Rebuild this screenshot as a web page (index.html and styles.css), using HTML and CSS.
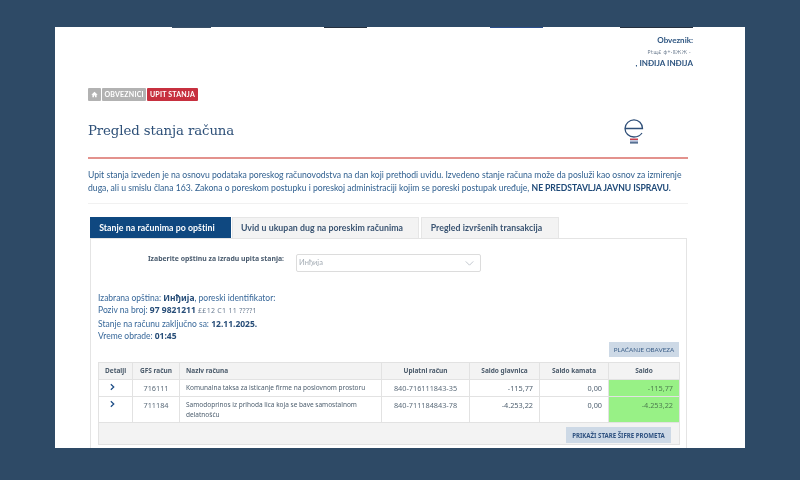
FILE: index.html
```html
<!DOCTYPE html>
<html lang="sr">
<head>
<meta charset="utf-8">
<title>Pregled stanja računa</title>
<link rel="stylesheet" href="styles.css">
</head>
<body>
<main class="sheet">
  <div class="topstrip"><i class="s1"></i><i class="s2"></i><i class="s3"></i><i class="s4"></i></div>
  <header class="taxpayer">
    <div>Obveznik:</div>
    <div class="masked">Ptщ£ ф+·ßЖЖ ·</div>
    <div>, INĐIJA INĐIJA</div>
  </header>
  <nav class="crumbs">
    <span class="crumb home"><svg viewBox="0 0 10 10" width="7" height="7"><path d="M5 1 0.5 5.2H2V9h2.2V6.4h1.6V9H8V5.2h1.5z" fill="#fff"/></svg></span>
    <span class="crumb">OBVEZNICI</span>
    <span class="crumb current">UPIT STANJA</span>
  </nav>
  <div class="titlebar">
    <h1>Pregled stanja računa</h1>
    <svg class="logo" viewBox="0 0 22 28" width="22" height="28">
      <path d="M2.5 11.5H19.5C19.5 6.5 15.5 2.8 11 2.8S2 6.8 2 11.5 6 20 11 20c3.4 0 6.300-1.500 8-4" fill="none" stroke="#2f4f78" stroke-width="1.300"/>
      <rect x="7" y="21.500" width="8" height="1.500" fill="#c8424e"/>
      <rect x="7" y="23.500" width="8" height="1.300" fill="#8d9cc0"/>
      <rect x="7" y="25.200" width="8" height="1.300" fill="#2f4f78"/>
    </svg>
  </div>
  <p class="notice">Upit stanja izveden je na osnovu podataka poreskog računovodstva na dan koji prethodi uvidu. Izvedeno stanje računa može da posluži kao osnov za izmirenje duga, ali u smislu člana 163. Zakona o poreskom postupku i poreskoj administraciji kojim se poreski postupak uređuje, <b>NE PREDSTAVLJA JAVNU ISPRAVU.</b></p>
  <div class="tabs">
    <div class="tab active">Stanje na računima po opštini</div>
    <div class="tab t2">Uvid u ukupan dug na poreskim računima</div>
    <div class="tab t3">Pregled izvršenih transakcija</div>
  </div>
  <section class="pane">
    <div class="selectrow">
      <label>Izaberite opštinu za izradu upita stanja:</label>
      <div class="select"><span>Инђија</span><svg viewBox="0 0 10 6" width="9" height="5"><path d="M.5.5 5 5 9.500.5" fill="none" stroke="#b5bcc4"/></svg></div>
    </div>
    <div class="info">
      <div>Izabrana opština: <b>Инђија</b>, poreski identifikator:</div>
      <div>Poziv na broj: <b>97 9821211 <span class="fuzz">££12 C1 11 ????1</span></b></div>
      <div>Stanje na računu zaključno sa: <b>12.11.2025.</b></div>
      <div>Vreme obrade: <b>01:45</b></div>
    </div>
    <div class="actions"><button class="btn pay">PLAĆANJE OBAVEZA</button></div>
    <table class="grid">
      <colgroup><col class="c1"><col class="c2"><col class="c3"><col class="c4"><col class="c5"><col class="c6"><col class="c7"></colgroup>
      <thead>
        <tr><th>Detalji</th><th>GFS račun</th><th class="left">Naziv računa</th><th>Uplatni račun</th><th>Saldo glavnica</th><th>Saldo kamata</th><th>Saldo</th></tr>
      </thead>
      <tbody>
        <tr><td class="mid"><svg class="chev" viewBox="0 0 6 8" width="5" height="8"><path d="M1 .8 4.500 4 1 7.200" fill="none" stroke="#1d4d86" stroke-width="1.500"/></svg></td><td class="mid">716111</td><td>Komunalna taksa za isticanje firme na poslovnom prostoru</td><td class="mid">840-716111843-35</td><td class="num">-115,77</td><td class="num">0,00</td><td class="num green">-115,77</td></tr>
        <tr class="tall"><td class="mid"><svg class="chev" viewBox="0 0 6 8" width="5" height="8"><path d="M1 .8 4.500 4 1 7.200" fill="none" stroke="#1d4d86" stroke-width="1.500"/></svg></td><td class="mid">711184</td><td>Samodoprinos iz prihoda lica koja se bave samostalnom delatnošću</td><td class="mid">840-711184843-78</td><td class="num">-4.253,22</td><td class="num">0,00</td><td class="num green">-4.253,22</td></tr>
      </tbody>
      <tfoot>
        <tr><td colspan="7"><div class="footcell"><button class="btn old">PRIKAŽI STARE ŠIFRE PROMETA</button></div></td></tr>
      </tfoot>
    </table>
  </section>
</main>
</body>
</html>
```
FILE: styles.css
```css
* { box-sizing: border-box; }
html, body { margin: 0; height: 100%; }
body {
  background: #2e4a66;
  font-family: "Lato", "Liberation Sans", sans-serif;
  color: #2e5b87;
  overflow: hidden;
  padding: 27px 55px 32px;
}
.sheet {
  position: relative;
  height: 421px;
  background: #fff;
  overflow: hidden;
  padding: 0 52px 0 33px;
  filter: blur(0.4px);
}
.topstrip { height: 1px; display: flex; margin-left: -33px; }
.topstrip i { display: block; height: 1px; background: #25303f; }
.topstrip .s1 { width: 40px; margin-left: 117px; background: #3a5068; }
.topstrip .s2 { width: 45px; margin-left: 113px; }
.topstrip .s3 { width: 55px; margin-left: 123px; background: #2c4f8c; }
.topstrip .s4 { width: 75px; margin-left: 77px; }
.taxpayer {
  text-align: right;
  font-size: 8px;
  line-height: 12px;
  padding-top: 6px;
  height: 54px;
  font-weight: 700;
  color: #2e5580;
}
.taxpayer div { height: 11.500px; }
.taxpayer .masked { font-size: 5px; font-weight: 400; letter-spacing: .5px; padding-right: 2px; color: #6f7f92; }
.crumbs { display: flex; gap: 1px; height: 13px; margin-top: 6px; }
.crumb {
  background: #b2b2b2;
  color: #fff;
  font-size: 7px;
  font-weight: 700;
  line-height: 13px;
  padding: 0 2.500px;
  letter-spacing: .2px;
  border-radius: 1px;
}
.crumb.home { width: 13px; padding: 0; display: flex; align-items: center; justify-content: center; margin-right: 0; }
.crumb.current { background: #c7303f; padding: 0 3.200px; margin-left: -.5px; }
.titlebar {
  position: relative;
  height: 58px;
  padding-top: 20px;
  border-bottom: 2px solid #e3928d;
  width: 600px;
}
h1 {
  margin: 0;
  font-family: "DejaVu Serif", "Liberation Serif", serif;
  font-weight: 400;
  font-size: 13.300px;
  line-height: 20px;
  color: #2e5078;
  letter-spacing: -.1px;
}
.logo { position: absolute; right: 43px; top: 16px; }
.notice {
  margin: 10px 0 0;
  width: 600px;
  height: 35px;
  font-size: 8.650px;
  line-height: 12.500px;
  border-bottom: 1px solid #f1f1f1;
  color: #2f5f8f;
}
.notice b { color: #1f4a78; letter-spacing: -.05px; }
.tabs { display: flex; margin: 13px 0 0 2px; height: 21px; align-items: stretch; }
.tab {
  font-size: 8.750px;
  line-height: 20px;
  text-align: center;
  white-space: nowrap;
  background: #f3f3f3;
  font-weight: 700;
  color: #3a5472;
  border: 1px solid #e6e6e6;
  border-bottom: 0;
  letter-spacing: .05px;
  padding-right: 7px;
}
.tab.active { width: 141px; background: #0f4880; color: #fff; border-color: #0f4880; }
.tab.t2 { width: 187px; margin-left: 1px; }
.tab.t3 { width: 138px; margin-left: 2px; }
.pane {
  margin-left: 2px;
  width: 597px;
  height: 220px;
  border: 1px solid #e4e4e4;
  border-bottom: 0;
  padding: 15px 7px 0 7px;
}
.selectrow { display: flex; align-items: flex-start; height: 18px; }
.selectrow label {
  width: 186px;
  text-align: right;
  font-size: 6.900px;
  font-weight: 700;
  line-height: 9px;
  color: #4a5c6f;
  font-family: "Noto Sans", sans-serif;
}
.select {
  margin-left: 12px;
  width: 185px;
  height: 18px;
  border: 1px solid #dcdcdc;
  border-radius: 2px;
  font-size: 7.500px;
  line-height: 16px;
  padding: 0 6px 0 2px;
  color: #a5adb5;
  display: flex;
  justify-content: space-between;
  align-items: center;
}
.info { margin-top: 19.500px; font-size: 8.500px; line-height: 12.600px; color: #38689a; height: 50.500px; }
.info b { color: #274d78; font-family: "Noto Sans", sans-serif; }
.fuzz { font-size: 7px; letter-spacing: .3px; color: #6a7c92; font-weight: 400; }
.actions { display: flex; justify-content: flex-end; height: 15px; width: 581px; margin-bottom: 5px; }
.btn {
  border: 0;
  padding: 0;
  font-family: "Lato", sans-serif;
  background: #cdd9e6;
  color: #44668e;
  font-size: 6.200px;
  line-height: 15px;
  height: 15px;
  font-weight: 500;
  white-space: nowrap;
}
.btn.pay { width: 70px; }
.btn.old { width: 105px; height: 16px; font-weight: 700; color: #2f5280; font-family: "Noto Sans", sans-serif; font-size: 6.100px; }
.grid {
  table-layout: fixed;
  width: 581px;
  border-collapse: collapse;
  font-family: "Noto Sans", sans-serif;
  font-size: 6.500px;
  color: #4f6070;
}
.c1 { width: 34px; } .c2 { width: 47px; } .c3 { width: 202px; } .c4 { width: 88px; }
.c5 { width: 70px; } .c6 { width: 69px; } .c7 { width: 71px; }
.grid th, .grid td { border: 1px solid #e2e2e2; padding: 0 6px; vertical-align: top; }
.grid th {
  height: 17px;
  background: #f3f3f3;
  font-weight: 700;
  line-height: 16px;
  text-align: center;
  color: #4a5a6a;
}
.grid th.left { text-align: left; }
.grid tbody tr { height: 17px; }
.grid tbody tr.tall { height: 26px; }
.grid td { line-height: 10px; padding-top: 3px; padding-bottom: 0; }
.grid td.mid { text-align: center; color: #5b6b7a; padding: 2.500px 0 0; font-size: 7.300px; }
.grid td.num { text-align: right; font-size: 7.300px; padding-top: 2.500px; }
.grid td.green { background: #98f186; color: #4e7d50; }
.chev { display: block; margin: 0 0 0 10.500px; }
.grid tfoot td { background: #f3f3f3; padding: 0; height: 22px; }
.footcell { display: flex; justify-content: flex-end; padding: 4px 8px 0 0; }
```
